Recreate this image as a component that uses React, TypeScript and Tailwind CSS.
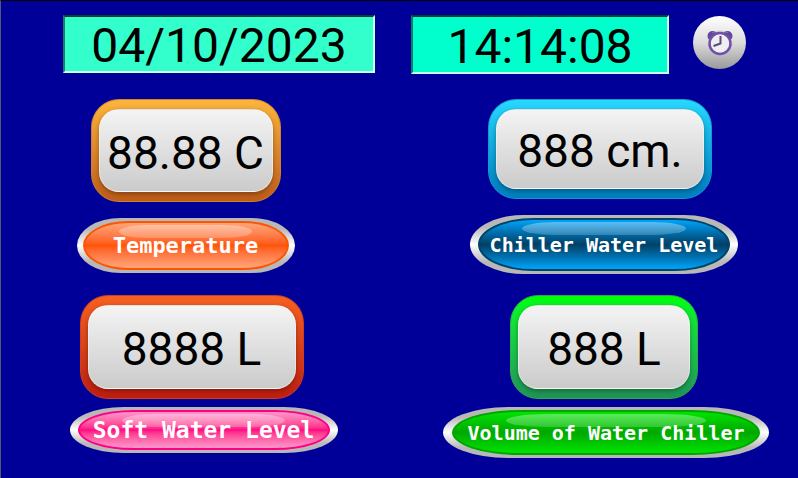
import React from "react";

type Gauge = {
  id: string;
  value: string;
  label: string;
  panel: string;
  frame: string;
  pill: string;
  face: string;
  text: string;
  stack: string;
  panelRow: string;
  pillRow: string;
};

const gauges: Gauge[] = [
  {
    id: "temperature",
    value: "88.88 C",
    label: "Temperature",
    panel: "h-[103px] w-[190px]",
    frame: "from-[#fdb43c] to-[#bf5c18] border-[#c8862c]",
    pill: "h-[55px] w-[218px] px-[6px]",
    face: "border-[#ff5500] from-[#ffa578] via-[#ff5500] to-[#ffa578]",
    text: "text-[22px]",
    stack: "gap-4",
    panelRow: "pr-1",
    pillRow: "pr-1",
  },
  {
    id: "chiller-level",
    value: "888 cm.",
    label: "Chiller Water Level",
    panel: "h-[100px] w-[224px]",
    frame: "from-[#27d8ff] to-[#007cbd] border-[#1598d0]",
    pill: "h-[59px] w-[268px] px-[8px]",
    face: "border-[#004468] from-[#00a4fc] via-[#004066] to-[#00a4fc]",
    text: "text-[20px]",
    stack: "gap-4",
    panelRow: "pr-2",
    pillRow: "",
  },
  {
    id: "soft-level",
    value: "8888 L",
    label: "Soft Water Level",
    panel: "h-[104px] w-[224px]",
    frame: "from-[#f56022] to-[#bf1c10] border-[#cf3c20]",
    pill: "h-[46px] w-[268px] px-[8px]",
    face: "border-[#ff0084] from-[#ff94cc] via-[#ff0084] to-[#ff94cc]",
    text: "text-[23px]",
    stack: "gap-2",
    panelRow: "pl-2",
    pillRow: "pl-8",
  },
  {
    id: "chiller-volume",
    value: "888 L",
    label: "Volume of Water Chiller",
    panel: "h-[104px] w-[188px]",
    frame: "from-[#00ff00] to-[#1f9456] border-[#2fa84a]",
    pill: "h-[51px] w-[326px] px-[9px]",
    face: "border-[#00a600] from-[#00e400] via-[#00a800] to-[#00e400]",
    text: "text-[20px]",
    stack: "gap-2",
    panelRow: "",
    pillRow: "pl-1",
  },
];

function GaugeTile({ gauge }: { gauge: Gauge }) {
  return (
    <section className={`flex flex-col ${gauge.stack}`}>
      <div className={`flex justify-center ${gauge.panelRow}`}>
        <div
          className={`rounded-[28px] border bg-linear-to-b px-[7px] py-[9px] ${gauge.panel} ${gauge.frame}`}
        >
          <output
            aria-labelledby={gauge.id}
            className="flex h-full items-center justify-center rounded-[20px] border border-white/40 bg-linear-to-b from-[#f4f4f4] to-[#cbcbcb] pt-1 text-[46px] leading-none whitespace-nowrap text-black shadow-[0_2px_5px_rgba(0,0,0,0.35)]"
          >
            {gauge.value}
          </output>
        </div>
      </div>
      <div className={`flex justify-center ${gauge.pillRow}`}>
        <button
          id={gauge.id}
          type="button"
          className={`rounded-[20%/50%] bg-linear-to-b from-[#b8b8b8] from-20% via-white to-[#b8b8b8] to-80% py-[3px] ${gauge.pill}`}
        >
          <span
            className={`relative flex h-full items-center justify-center rounded-[22%/50%] border-2 bg-linear-to-b ${gauge.face}`}
          >
            <span className="absolute inset-x-[17%] top-[2px] h-[13px] rounded-[25%/60%] bg-linear-to-b from-white/35 to-white/20" />
            <span
              className={`relative font-['DejaVu_Sans_Mono',monospace] leading-none font-bold whitespace-nowrap text-white ${gauge.text}`}
            >
              {gauge.label}
            </span>
          </span>
        </button>
      </div>
    </section>
  );
}

function AlarmIcon() {
  return (
    <svg viewBox="0 0 26 26" className="h-[26px] w-[26px]" aria-hidden="true">
      <circle cx="5.5" cy="6" r="5" fill="#65489a" />
      <circle cx="20.5" cy="6" r="5" fill="#65489a" />
      <path d="M5 2.5Q13 -0.5 21 2.5" fill="none" stroke="#a8a4b4" strokeWidth="0.5" />
      <circle cx="13" cy="13.5" r="10.5" fill="#efefef" stroke="#7050a8" strokeWidth="2.5" />
      <path d="M13.5 6V13.5L6.5 16" fill="none" stroke="#5a4a85" strokeWidth="2" />
    </svg>
  );
}

export default function App() {
  return (
    <main className="min-h-screen border-t border-l border-t-black border-l-[#555577] bg-[#000099] font-[Roboto,sans-serif]">
      <header className="flex items-start pt-[14px] pr-[52px] pb-[25px] pl-[62px]">
        <time
          dateTime="2023-10-04"
          className="mr-9 flex h-[58px] flex-[313] items-center justify-center border-2 border-t-[#103c34] border-r-[#c8fff0] border-b-[#c8fff0] border-l-[#207c68] bg-[#33ffcc] pt-1 text-[48px] leading-none text-black"
        >
          04/10/2023
        </time>
        <time
          dateTime="14:14:08"
          className="mr-6 flex h-[59px] flex-[258] items-center justify-center border-2 border-t-[#083c34] border-r-[#c8fff0] border-b-[#c8fff0] border-l-[#087c68] bg-[#00ffcc] pt-1 text-[48px] leading-none text-black"
        >
          14:14:08
        </time>
        <button
          type="button"
          aria-label="Alarm clock"
          className="mt-px flex h-[53px] w-[53px] shrink-0 items-center justify-center rounded-full bg-linear-to-b from-white via-[#dcdcdc] to-[#999999]"
        >
          <AlarmIcon />
        </button>
      </header>
      <div className="grid grid-cols-[373fr_388fr] gap-x-9 gap-y-[21px] pb-4">
        {gauges.map((gauge) => (
          <GaugeTile key={gauge.id} gauge={gauge} />
        ))}
      </div>
    </main>
  );
}
